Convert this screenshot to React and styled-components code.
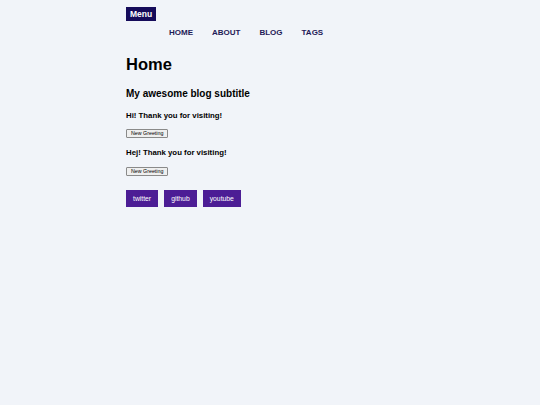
import React, { useState } from 'react';
import styled, { createGlobalStyle } from 'styled-components';

const GlobalStyle = createGlobalStyle`
    html, body {
        margin: 0;
        padding: 0;
        background: #f1f4f9;
        font-family: "Liberation Sans", Arial, sans-serif;
        color: #000;
    }
`

const Page = styled.div`
    min-height: 405px;
    background: #f1f4f9;
`

const Container = styled.div`
    width: 288px;
    margin: 0 auto;
    padding-top: 7px;
    display: flex;
    flex-direction: column;
`

const MenuBtn = styled.button`
    align-self: flex-start;
    background: #150b5a;
    color: #fff;
    border: 0;
    padding: 0 4px;
    height: 14px;
    font-family: "Liberation Sans", Arial, sans-serif;
    font-size: 8.5px;
    font-weight: 700;
    line-height: 14px;
    cursor: pointer;
`

const Nav = styled.nav`
    display: flex;
    gap: 19px;
    padding-left: 43px;
    margin-top: 7px;
`

const NavLink = styled.a`
    color: #1f1a57;
    font-size: 8px;
    font-weight: 700;
    text-transform: uppercase;
    text-decoration: none;
    line-height: 10px;
`

const Title = styled.h1`
    font-size: 16.5px;
    font-weight: 700;
    margin: 16px 0 0;
    line-height: 20px;
`

const Subtitle = styled.h2`
    font-size: 10px;
    font-weight: 700;
    margin: 14px 0 0;
    line-height: 12px;
`

const Greeting = styled.h3`
    font-size: 7.8px;
    font-weight: 700;
    margin: ${p => p.first ? '11px' : '10px'} 0 0;
    line-height: 10px;
`

const GreetBtn = styled.button`
    align-self: flex-start;
    margin-top: ${p => p.first ? '8px' : '9px'};
    height: 9px;
    padding: 0 4px;
    font-family: "Liberation Sans", Arial, sans-serif;
    font-size: 5.3px;
    line-height: 7px;
    color: #000;
    background: #efefef;
    border: 1px solid #8a8a8a;
    border-radius: 1px;
`

const Socials = styled.div`
    display: flex;
    gap: 6px;
    margin-top: 14px;
`

const SocialLink = styled.a`
    display: flex;
    align-items: center;
    justify-content: center;
    height: 17px;
    padding: 0 7px;
    background: #4c1d95;
    color: #fff;
    font-size: 6.8px;
    text-decoration: none;
`

const greetings = ['Hi', 'Hej', 'Hola', 'Hallo', 'Ciao']

function Greeter({ start, first }) {
    const [idx, setIdx] = useState(start)
    return (
        <React.Fragment>
            <Greeting first={first}>{greetings[idx]}! Thank you for visiting!</Greeting>
            <GreetBtn type="button" first={first} onClick={() => setIdx((idx + 1) % greetings.length)}>New Greeting</GreetBtn>
        </React.Fragment>
    )
}

export default function App() {
    return (
        <Page>
            <GlobalStyle />
            <Container>
                <MenuBtn type="button">Menu</MenuBtn>
                <Nav>
                    <NavLink href="#">Home</NavLink>
                    <NavLink href="#">About</NavLink>
                    <NavLink href="#">Blog</NavLink>
                    <NavLink href="#">Tags</NavLink>
                </Nav>
                <Title>Home</Title>
                <Subtitle>My awesome blog subtitle</Subtitle>
                <Greeter start={0} first />
                <Greeter start={1} />
                <Socials>
                    <SocialLink href="#">twitter</SocialLink>
                    <SocialLink href="#">github</SocialLink>
                    <SocialLink href="#">youtube</SocialLink>
                </Socials>
            </Container>
        </Page>
    )
}
